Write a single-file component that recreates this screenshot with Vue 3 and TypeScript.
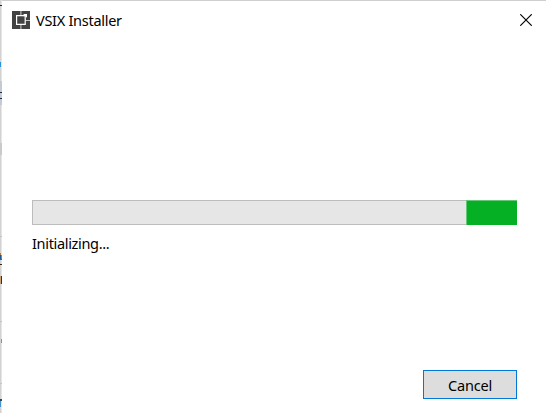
<script setup lang="ts">
import { ref } from 'vue'

const title = ref('VSIX Installer')
const status = ref('Initializing...')
const barStart = ref(433)
</script>

<template>
  <div class="screen">
    <svg class="edge" width="2" height="413" viewBox="0 0 2 413" shape-rendering="crispEdges">
      <rect width="1" height="413" fill="#d2d2d2" />
      <rect x="1" width="1" height="413" fill="#e6e6e6" />
      <rect y="5" width="2" height="1" fill="#202020" />
      <rect y="62" width="1" height="5" fill="#2b91d8" />
      <rect y="81" width="2" height="24" fill="#c5c9d0" />
      <rect y="92" width="2" height="1" fill="#1f2b55" />
      <rect y="98" width="2" height="1" fill="#1f2b55" />
      <rect y="143" width="2" height="12" fill="#cacaca" />
      <rect y="236" width="2" height="1" fill="#c4c4c4" />
      <rect y="253" width="1" height="2" fill="#b87a32" />
      <rect y="255" width="1" height="4" fill="#1c5796" />
      <rect x="1" y="255" width="1" height="4" fill="#6b8fa0" />
      <rect y="259" width="2" height="1" fill="#765536" />
      <rect y="264" width="2" height="1" fill="#342619" />
      <rect y="276" width="1" height="8" fill="#c5a078" />
      <rect x="1" y="276" width="1" height="8" fill="#482449" />
      <rect y="321" width="2" height="1" fill="#c4c4c4" />
      <rect x="1" y="339" width="1" height="4" fill="#c98735" />
      <rect y="383" width="2" height="1" fill="#c4c4c4" />
      <rect y="399" width="2" height="2" fill="#244f63" />
      <rect y="401" width="1" height="6" fill="#4594d1" />
    </svg>
    <main class="window">
      <header class="titlebar">
        <svg class="logo" width="18" height="18" viewBox="0 0 18 18">
          <path d="M0 0H18V18H0Z" fill="#424242" />
          <path d="M8.9 0V5M13 9.5H18M8.9 14V18" stroke="#c4c4c4" stroke-width="1.1" />
          <path d="M4.6 4.6H13.2V13.4H4.6Z" fill="none" stroke="#fff" stroke-width="1.2" />
          <path d="M11.6 3H15V6.2H13.8V5.2H11.6Z" fill="#fff" />
        </svg>
        <h1 class="title">{{ title }}</h1>
        <svg class="close" width="12" height="12" viewBox="0 0 12 12">
          <path d="M.25 .25L11.75 11.75M11.75 .25L.25 11.75" stroke="#000" stroke-width="1.15" />
        </svg>
      </header>
      <section class="content">
        <div class="track"><div class="fill" :style="{ marginLeft: barStart + 'px' }"></div></div>
        <p class="status">{{ status }}</p>
      </section>
      <footer class="footer"><button class="cancel"><span>Cancel</span></button></footer>
    </main>
  </div>
</template>

<style>
body { margin: 0; overflow: hidden; background: #fff; }
</style>

<style scoped>
* { box-sizing: border-box; }
.screen { display: flex; width: 546px; height: 413px; background: #fff; font-family: "Noto Sans", "Open Sans", sans-serif; color: #000; }
.edge { flex: none; display: block; }
.window { width: 544px; height: 413px; border-top: 1px solid #cfcfcf; display: flex; flex-direction: column; }
.titlebar { display: flex; align-items: flex-start; height: 44px; padding: 10px 14px 0 10px; }
.logo { flex: none; }
.title { margin: -1px 0 0 6px; font-size: 14.5px; line-height: 20px; font-weight: 400; white-space: nowrap; letter-spacing: -.28px; }
.close { margin: 3px 0 0 auto; }
.content { padding: 155px 29px 0 30px; height: 220px; }
.track { width: 485px; height: 25px; background: #e6e6e6; border: 1px solid #bcbcbc; border-right: 0; }
.fill { width: 51px; height: 25px; margin-top: -1px; background: #06b025; border: solid #66c779; border-width: 1px 0 0 1px; }
.status { margin: 8px 0 0; font-size: 14.5px; line-height: 20px; letter-spacing: -.33px; white-space: nowrap; }
.footer { margin-top: auto; padding: 0 29px 14px; display: flex; justify-content: flex-end; }
.cancel { width: 94px; height: 29px; padding: 1px 0 0; border: 1px solid #0078d7; border-radius: 0; background: #ddd; color: #000; font: 14.5px/20px "Noto Sans", "Open Sans", sans-serif; letter-spacing: -.2px; }
</style>
